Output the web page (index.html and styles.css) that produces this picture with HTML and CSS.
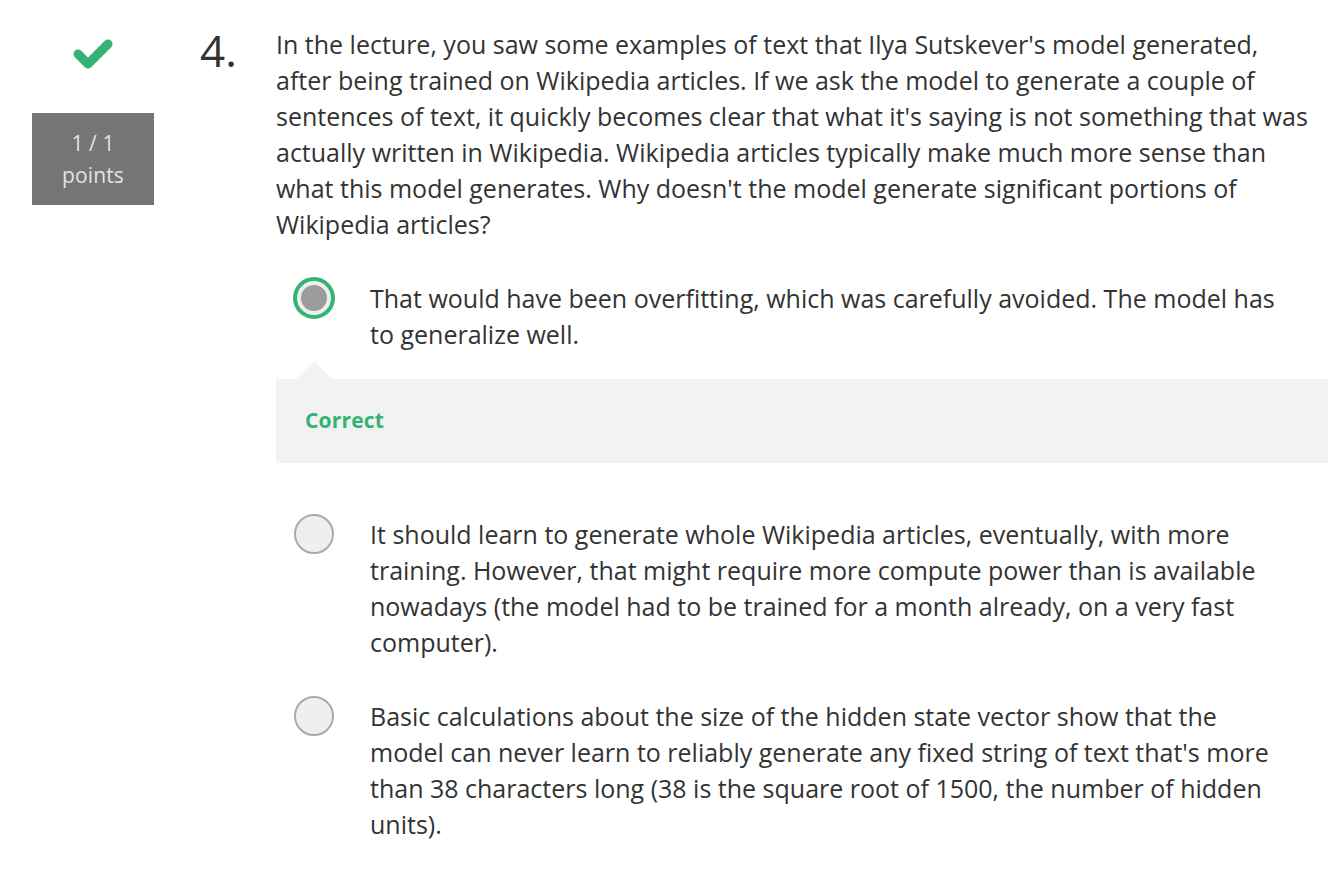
FILE: index.html
```html
<!DOCTYPE html>
<html>
<head>
<meta charset="utf-8">
<link rel="stylesheet" href="styles.css">
</head>
<body>
<div class="question">
  <div class="status">
    <svg class="check" width="40" height="32" viewBox="0 0 40 32">
      <path d="M5 17 L15 27 L35 7" fill="none" stroke="#35b374" stroke-width="9" stroke-linecap="round" stroke-linejoin="round"/>
    </svg>
    <div class="points">1 / 1<br>points</div>
  </div>
  <div class="number">4.</div>
  <div class="body">
    <div class="prompt">In the lecture, you saw some examples of text that Ilya Sutskever's model generated, after being trained on Wikipedia articles. If we ask the model to generate a couple of sentences of text, it quickly becomes clear that what it's saying is not something that was actually written in Wikipedia. Wikipedia articles typically make much more sense than what this model generates. Why doesn't the model generate significant portions of Wikipedia articles?</div>
    <div class="option option-first">
      <span class="radio radio-selected"><span class="radio-dot"></span></span>
      <div class="option-text">That would have been overfitting, which was carefully avoided. The model has to generalize well.</div>
    </div>
    <div class="feedback">
      <span class="feedback-arrow"></span>
      <span class="feedback-label">Correct</span>
    </div>
    <div class="option">
      <span class="radio"></span>
      <div class="option-text">It should learn to generate whole Wikipedia articles, eventually, with more training. However, that might require more compute power than is available nowadays (the model had to be trained for a month already, on a very fast computer).</div>
    </div>
    <div class="option">
      <span class="radio"></span>
      <div class="option-text">Basic calculations about the size of the hidden state vector show that the model can never learn to reliably generate any fixed string of text that's more than 38 characters long (38 is the square root of 1500, the number of hidden units).</div>
    </div>
  </div>
</div>
</body>
</html>
```

FILE: styles.css
```css
html, body {
  margin: 0;
  padding: 0;
  background: #ffffff;
}

body {
  font-family: "Open Sans", "Noto Sans", sans-serif;
  color: #333333;
  width: 1341px;
  height: 873px;
  overflow: hidden;
}

.question {
  display: flex;
  padding: 26px 13px 0 32px;
}

.status {
  width: 122px;
  flex: none;
  display: flex;
  flex-direction: column;
  align-items: center;
}

.check {
  display: block;
  margin-top: 11px;
}

.points {
  margin-top: 44px;
  width: 122px;
  background: #757575;
  color: #e2e2e2;
  font-size: 21px;
  letter-spacing: 0.1px;
  line-height: 32px;
  text-align: center;
  padding: 14px 0;
}

.number {
  flex: none;
  width: 76px;
  margin-left: 46px;
  margin-top: 3px;
  font-size: 44px;
  line-height: 42px;
  color: #333333;
}

.body {
  flex: 1;
  width: 1052px;
}

.prompt {
  font-size: 25px;
  line-height: 36px;
  padding-right: 10px;
}

.option {
  display: flex;
  align-items: flex-start;
  padding-left: 18px;
  padding-right: 38px;
  margin-top: 38px;
}

.radio {
  flex: none;
  box-sizing: border-box;
  width: 40px;
  height: 40px;
  border-radius: 50%;
  border: 2px solid #aaaaaa;
  background: #efefef;
  margin-top: -2px;
  display: flex;
  align-items: center;
  justify-content: center;
}

.radio-selected {
  width: 42px;
  height: 42px;
  margin-left: -1px;
  margin-right: -1px;
  margin-top: -3px;
  border: 4px solid #35b374;
  background: #eeeeee;
}

.radio-dot {
  width: 26px;
  height: 26px;
  border-radius: 50%;
  background: #9b9b9b;
}

.option-text {
  margin-left: 36px;
  font-size: 25px;
  line-height: 36px;
}

.feedback {
  position: relative;
  margin-top: 27px;
  margin-bottom: 53px;
  background: #f2f2f2;
  height: 84px;
  box-sizing: border-box;
  padding: 26px 29px 28px;
}

.feedback-arrow {
  position: absolute;
  top: -18px;
  left: 20px;
  width: 0;
  height: 0;
  border-left: 18px solid transparent;
  border-right: 18px solid transparent;
  border-bottom: 18px solid #f2f2f2;
}

.feedback-label {
  display: block;
  color: #35b374;
  font-weight: 700;
  font-size: 21px;
  letter-spacing: 0.2px;
  line-height: 30px;
}
```
